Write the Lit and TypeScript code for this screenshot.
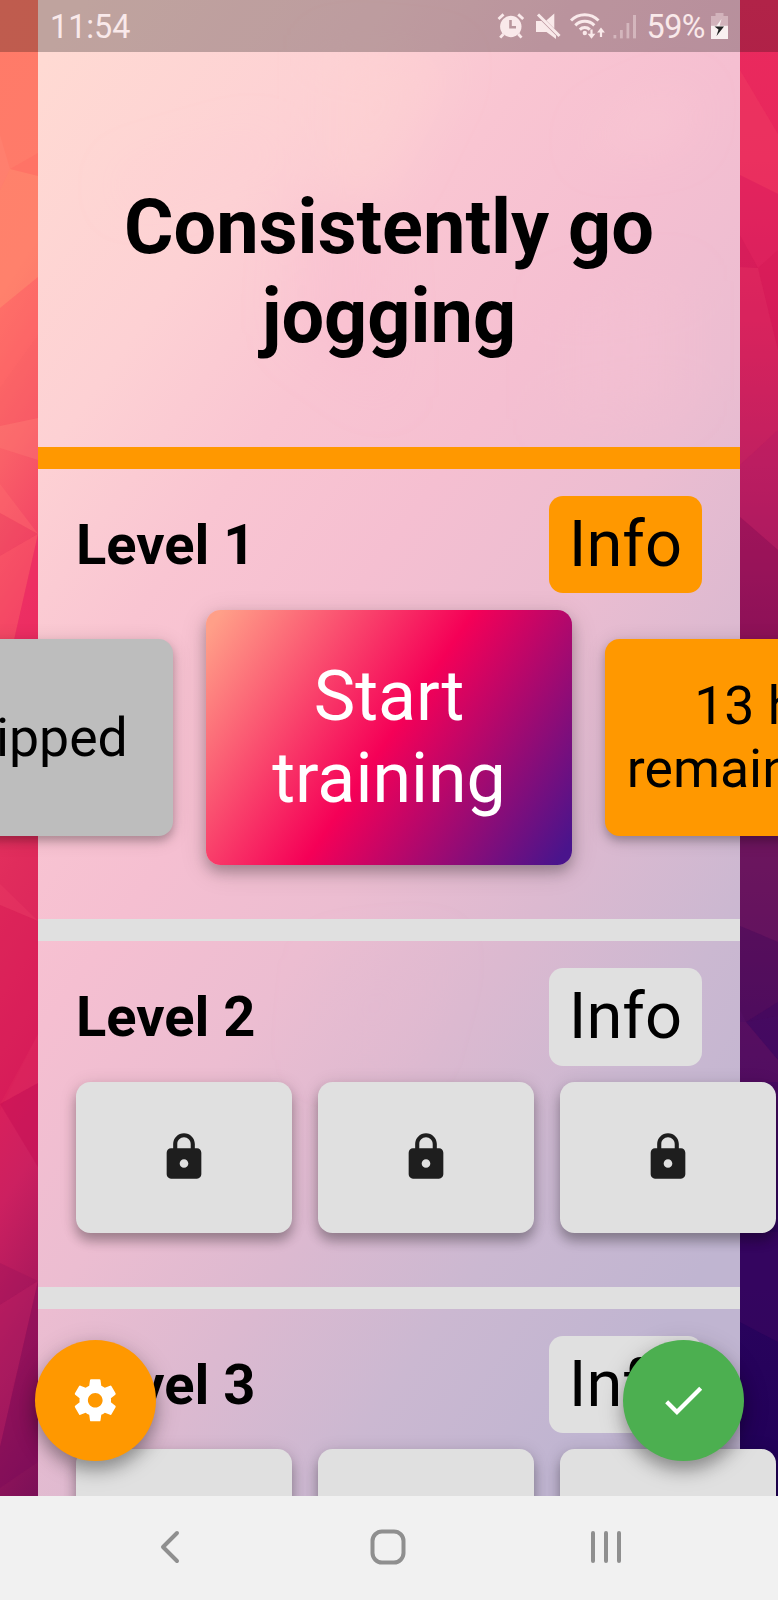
import { LitElement, html, svg, css } from "lit";
import { customElement, property } from "lit/decorators.js";
import { classMap } from "lit/directives/class-map.js";

@customElement("poly-backdrop")
class PolyBackdrop extends LitElement {
  static styles = css`
    :host { display: block; }
    .art { display: block; width: 100%; height: 100%; }
  `;

  // [points, fill, opacity] of the facets seen beside the panel
  private facets: [string, string, number][] = [
    ["0,135 10,169 0,190", "#ffffff", 0.04],
    ["10,169 38,153 38,176", "#ff5a58", 0.2],
    ["10,169 38,176 38,277 0,308 0,190", "#ff9070", 0.35],
    ["0,308 38,277 38,335 0,388", "#ff5a62", 0.3],
    ["0,388 38,335 38,418 0,426", "#f8505f", 0.25],
    ["0,426 38,418 38,460 0,448", "#ff8078", 0.3],
    ["0,484 38,534 0,513", "#ff7070", 0.35],
    ["0,513 38,534 0,556", "#e63c5c", 0.25],
    ["0,556 38,534 14,640 0,640", "#fc5c68", 0.35],
    ["38,534 38,640 14,640", "#e82062", 0.45],
    ["0,884 38,921 0,905", "#f04568", 0.25],
    ["0,905 38,921 38,1034 0,1110", "#d80f52", 0.2],
    ["38,1034 38,1083 0,1104", "#e83060", 0.2],
    ["0,1104 38,1083 38,1167", "#c00850", 0.35],
    ["0,1263 38,1281 0,1305", "#98105a", 0.3],
    ["0,1305 38,1281 0,1447", "#b82064", 0.35],
    ["38,1281 38,1462 0,1488 0,1447", "#780a58", 0.35],
    ["740,70 778,134 778,52 740,52", "#e82058", 0.3],
    ["740,70 778,134 778,194 740,175", "#f03c60", 0.35],
    ["740,175 778,194 778,250 758,268 740,235", "#dc1c5c", 0.3],
    ["740,235 758,268 740,267", "#c80c54", 0.3],
    ["758,268 778,250 778,350", "#d01054", 0.35],
    ["740,267 758,268 778,350 778,430 740,465", "#dc2a60", 0.25],
    ["740,465 778,430 778,550 740,517", "#c42064", 0.35],
    ["740,517 778,550 778,640 740,640", "#8c0c54", 0.35],
    ["740,836 778,836 778,942 740,926", "#70185e", 0.35],
    ["740,926 778,942 778,1002 746,1022 740,1010", "#4c0a58", 0.4],
    ["746,1022 778,1002 778,1016", "#38045a", 0.45],
    ["746,1022 778,1016 778,1060", "#3c0860", 0.55],
    ["740,1022 746,1022 778,1060 778,1082 740,1082", "#5c1060", 0.5],
    ["740,1232 778,1232 778,1342 740,1322", "#3c0860", 0.55],
  ];

  render() {
    return html`<svg class="art" viewBox="0 0 778 1600" preserveAspectRatio="none">
      <defs>
        <linearGradient id="deep" gradientUnits="userSpaceOnUse" x1="0" y1="0" x2="1125" y2="731">
          <stop offset="0" stop-color="#ff7b68"></stop>
          <stop offset=".12" stop-color="#ff7a6a"></stop>
          <stop offset=".19" stop-color="#f95f68"></stop>
          <stop offset=".26" stop-color="#f03c64"></stop>
          <stop offset=".36" stop-color="#e02c5c"></stop>
          <stop offset=".45" stop-color="#d8205c"></stop>
          <stop offset=".49" stop-color="#cc2060"></stop>
          <stop offset=".55" stop-color="#a8185c"></stop>
          <stop offset=".63" stop-color="#7c1058"></stop>
        </linearGradient>
        <linearGradient id="night" x1="0" y1="0" x2="0" y2="1600" gradientUnits="userSpaceOnUse">
          <stop offset="0" stop-color="#ec2f60"></stop>
          <stop offset=".1" stop-color="#e82a5e"></stop>
          <stop offset=".2" stop-color="#d8205c"></stop>
          <stop offset=".29" stop-color="#b81c60"></stop>
          <stop offset=".4" stop-color="#8c145a"></stop>
          <stop offset=".54" stop-color="#68145e"></stop>
          <stop offset=".66" stop-color="#4c0c62"></stop>
          <stop offset=".78" stop-color="#2c045e"></stop>
          <stop offset=".93" stop-color="#200058"></stop>
        </linearGradient>
        <linearGradient id="veil" gradientUnits="userSpaceOnUse" x1="0" y1="0" x2="1120" y2="806">
          <stop offset=".05" stop-color="#ffdad3"></stop>
          <stop offset=".22" stop-color="#fdd1d4"></stop>
          <stop offset=".34" stop-color="#f9c5d2"></stop>
          <stop offset=".46" stop-color="#f5bfd1"></stop>
          <stop offset=".58" stop-color="#ecbdd1"></stop>
          <stop offset=".7" stop-color="#dcb9d0"></stop>
          <stop offset=".82" stop-color="#cbb8d1"></stop>
          <stop offset=".95" stop-color="#c0b5d1"></stop>
        </linearGradient>
        <filter id="soft" x="-30%" y="-30%" width="160%" height="160%">
          <feGaussianBlur stdDeviation="24"></feGaussianBlur>
        </filter>
      </defs>
      <rect width="400" height="1600" fill="url(#deep)"></rect>
      <rect x="400" width="378" height="1600" fill="url(#night)"></rect>
      ${this.facets.map(([p, f, o]) => svg`<polygon points=${p} fill=${f} fill-opacity=${o}></polygon>`)}
      <rect x="38" width="702" height="1496" fill="url(#veil)"></rect>
      <g filter="url(#soft)">
        <polygon points="330,50 450,60 390,180 330,220" fill="#ffd8d2" fill-opacity=".35"></polygon>
        <polygon points="600,130 690,90 680,140 590,150" fill="#fbd0d6" fill-opacity=".35"></polygon>
        <polygon points="120,180 260,140 280,155 130,200" fill="#fbc8d0" fill-opacity=".35"></polygon>
        <polygon points="300,190 380,210 390,400 290,330" fill="#f6b8d0" fill-opacity=".25"></polygon>
        <polygon points="560,300 680,280 680,400 560,420" fill="#f4c0d2" fill-opacity=".4"></polygon>
        <polygon points="330,960 440,950 410,1060 320,1060" fill="#e6bad0" fill-opacity=".3"></polygon>
      </g>
    </svg>`;
  }
}

@customElement("status-bar")
class StatusBar extends LitElement {
  static styles = css`
    :host {
      display: flex; align-items: center; justify-content: space-between;
      box-sizing: border-box; height: 52px; padding: 2px 50px 0 50px;
      background: rgba(0, 0, 0, 0.25); color: #f9e9ea;
      font-size: 32.300px; line-height: 1;
    }
    .tray { display: flex; align-items: center; }
    .icons { display: block; width: 150px; height: 30px; margin-top: -2px; }
    .battery { display: block; width: 17px; height: 30px; margin: -2px 0 0 6px; }
    .pct { letter-spacing: -0.5px; margin-left: 1px; }
  `;
  render() {
    return html`
      <span>11:54</span>
      <div class="tray">
        <svg class="icons" viewBox="496 11 150 30" fill="#f9e9ea" stroke="none">
          <circle cx="510.800" cy="26.500" r="10.700"></circle>
          <path d="M498.500 19l5-4.600M523.200 19l-5-4.600" stroke="#f9e9ea" stroke-width="2.800"></path>
          <path d="M503.500 34l-3.300 3.600M518.200 34l3.300 3.600" stroke="#f9e9ea" stroke-width="2.800"></path>
          <path d="M510.500 20v7.300h5.500" fill="none" stroke="#b9979d" stroke-width="2.600"></path>
          <path d="M536 21h5.500L556 35.500V39l-9.500-7H536zM546.300 20.600l8-7.100v15z"></path>
          <path d="M538 14.500l21.500 21.500" fill="none" stroke="#f9e9ea" stroke-width="3"></path>
          <path d="M571 20.500a19.500 19.500 0 0 1 27.500 0M575.300 25.400a13.200 13.200 0 0 1 19 0M579.800 29.600a7.200 7.200 0 0 1 10 0" fill="none" stroke="#f9e9ea" stroke-width="3"></path>
          <circle cx="584.800" cy="33" r="2.200"></circle>
          <path d="M591.500 29.500v5.500M601 37v-5.500" stroke="#f9e9ea" stroke-width="2.200"></path>
          <path d="M587.600 33.800h7.800l-3.900 5zM597.100 32.400h7.800l-3.900-5z"></path>
          <g fill-opacity=".42">
            <rect x="613.500" y="35" width="2.800" height="3.400"></rect>
            <rect x="620" y="30" width="2.800" height="8.400"></rect>
            <rect x="626.500" y="23" width="2.800" height="15.400"></rect>
            <rect x="633" y="15" width="3" height="23.400"></rect>
          </g>
        </svg>
        <span class="pct">59%</span>
        <svg class="battery" viewBox="711 11 17 30">
          <path d="M715.500 13h8v3h4.500v9h-17v-9h4.500z" fill="#f9e9ea" fill-opacity=".4"></path>
          <rect x="711" y="25.500" width="17" height="13.500" fill="#f9f0f0"></rect>
          <path d="M721.500 19l-6.500 9h4z" fill="#f9f0f0"></path>
          <path d="M714.500 26.500h9.500l-7.500 9.500 2-6.500z" fill="#222"></path>
        </svg>
      </div>
    `;
  }
}

@customElement("session-card")
class SessionCard extends LitElement {
  @property() kind = "locked";
  @property({ attribute: false }) lines: string[] = [];

  static styles = css`
    :host { display: block; flex: none; }
    .card {
      display: flex; flex-direction: column; align-items: center; justify-content: center;
      box-sizing: border-box; width: 281px; height: 196.500px; border-radius: 14.500px;
      font-size: 53.600px; line-height: 62.800px; color: #000; white-space: nowrap;
      box-shadow: 0 5px 9px rgba(0, 0, 0, 0.22), 0 3px 20px rgba(0, 0, 0, 0.14);
    }
    .skipped { background: #bdbdbd; padding-top: 1px; }
    .waiting { background: #ff9800; }
    .active {
      width: 365.300px; height: 255.300px; font-size: 69.900px; line-height: 81.500px; color: #fff;
      background: linear-gradient(124deg, #ff9f88 3%, #f50057 50%, #4a148c 97%);
      box-shadow: 0 7px 13px rgba(0, 0, 0, 0.24), 0 6px 28px rgba(0, 0, 0, 0.14);
    }
    .locked { width: 216px; height: 151.300px; background: #e0e0e0;
      box-shadow: 0 8px 12px rgba(0, 0, 0, 0.28), 0 2px 18px rgba(0, 0, 0, 0.12); }
    .lock { display: block; width: 52px; height: 52px; fill: #1e1e1e; }
  `;

  render() {
    return html`<div class=${classMap({ card: true, [this.kind]: true })}>
      ${this.kind === "locked"
        ? html`<svg class="lock" viewBox="0 0 24 24"><path d="M18 8h-1V6c0-2.760-2.240-5-5-5S7 3.240 7 6v2H6c-1.100 0-2 .9-2 2v10c0 1.100.9 2 2 2h12c1.100 0 2-.9 2-2V10c0-1.100-.9-2-2-2zm-6 9c-1.100 0-2-.9-2-2s.9-2 2-2 2 .9 2 2-.9 2-2 2zm3.100-9H8.900V6c0-1.710 1.390-3.100 3.100-3.100 1.710 0 3.100 1.390 3.100 3.100v2z"></path></svg>`
        : this.lines.map((l) => html`<span>${l}</span>`)}
    </div>`;
  }
}

@customElement("level-section")
class LevelSection extends LitElement {
  @property() name = "";
  @property({ type: Boolean }) current = false;

  static styles = css`
    :host { display: block; }
    .level { border-top: 22px solid #e0e0e0; padding: 27px 38px 0; }
    .level.current { border-color: #ff9800; }
    .head { display: flex; align-items: center; justify-content: space-between; height: 97.300px; }
    .name { font-size: 56px; line-height: 1; font-weight: 700; margin: 0; padding-top: 1px; }
    .info {
      font: inherit; font-size: 65px; line-height: 97px; color: #000; border: 0; padding: 0;
      box-sizing: border-box; width: 153.300px; height: 97.300px; border-radius: 14px; background: #e0e0e0;
    }
    .current .info { background: #ff9800; }
    .row { display: flex; gap: 26px; height: 205.700px; padding-top: 16px; box-sizing: border-box; align-items: flex-start; }
    .current .row { gap: 33.500px; height: 325.500px; margin: 0 -76px; justify-content: center; }
    .current .row { align-items: center; padding: 0 0 37px; }
  `;

  render() {
    return html`<section class=${classMap({ level: true, current: this.current })}>
      <div class="head">
        <h2 class="name">${this.name}</h2>
        <button class="info">Info</button>
      </div>
      <div class="row"><slot></slot></div>
    </section>`;
  }
}

@customElement("app-root")
class AppRoot extends LitElement {
  static styles = css`
    :host {
      display: block; width: 778px; height: 1600px; overflow: hidden; position: relative;
      font-family: Roboto, sans-serif; color: #000;
    }
    .screen { display: grid; grid-template: 1496px 104px / 778px; height: 1600px; }
    .backdrop { grid-area: 1 / 1 / 3 / 2; }
    .content { grid-area: 1 / 1 / 2 / 2; overflow: hidden; z-index: 1; }
    .panel { margin: 0 38px; }
    .title {
      display: flex; align-items: center; justify-content: center; text-align: center;
      box-sizing: border-box; height: 395px; margin: 0; padding: 44px 60px 0;
      font-size: 75.700px; line-height: 88.700px; font-weight: 700;
    }
    .level-1 { height: 472.300px; }
    .level-2 { height: 367.500px; }
    .nav {
      grid-area: 2 / 1 / 3 / 2; z-index: 2; background: #f1f1f1; display: flex;
      align-items: center; justify-content: space-between; padding: 0 153px 2px 151px;
    }
    .key { display: block; width: 38px; height: 38px; fill: none; stroke: #8f8f8f; stroke-width: 4; stroke-linecap: round; stroke-linejoin: round; }
    .fab {
      position: absolute; z-index: 3; top: 1340px; width: 121px; height: 121px; border-radius: 50%;
      display: flex; align-items: center; justify-content: center; border: 0; padding: 0;
      box-shadow: 0 9px 16px rgba(0, 0, 0, 0.28), 0 6px 28px rgba(0, 0, 0, 0.16);
    }
    .settings { left: 34.500px; background: #ff9800; }
    .done { left: 622.500px; background: #4caf50; }
    .glyph { display: block; width: 50.500px; height: 50.500px; fill: #fff; }
  `;

  render() {
    return html`<div class="screen">
      <poly-backdrop class="backdrop"></poly-backdrop>
      <div class="content">
        <status-bar></status-bar>
        <main class="panel">
          <h1 class="title">Consistently go jogging</h1>
          <level-section class="level-1" name="Level 1" current>
            <session-card kind="skipped" .lines=${["Skipped"]}></session-card>
            <session-card kind="active" .lines=${["Start", "training"]}></session-card>
            <session-card kind="waiting" .lines=${["13 h", "remaining"]}></session-card>
          </level-section>
          ${[2, 3].map((n) => html`<level-section class=${"level-" + n} name=${"Level " + n}>
            ${[1, 2, 3].map(() => html`<session-card kind="locked"></session-card>`)}
          </level-section>`)}
        </main>
      </div>
      <button class="fab settings" aria-label="Settings">
        <svg class="glyph" viewBox="0 0 24 24"><path d="M19.430 12.980c.04-.32.07-.64.07-.98s-.03-.66-.07-.98l2.110-1.650c.19-.15.24-.42.12-.64l-2-3.460c-.12-.22-.39-.3-.61-.22l-2.490 1c-.52-.4-1.080-.73-1.690-.98l-.38-2.650C14.460 2.180 14.250 2 14 2h-4c-.25 0-.46.18-.49.42l-.38 2.650c-.61.25-1.170.59-1.690.98l-2.490-1c-.23-.09-.49 0-.61.22l-2 3.460c-.13.22-.07.49.12.64l2.110 1.650c-.04.32-.07.65-.07.98s.03.66.07.98l-2.110 1.650c-.19.15-.24.42-.12.64l2 3.460c.12.22.39.3.61.22l2.490-1c.52.4 1.080.73 1.690.98l.38 2.650c.03.24.24.42.49.42h4c.25 0 .46-.18.49-.42l.38-2.650c.61-.25 1.170-.59 1.690-.98l2.490 1c.23.09.49 0 .61-.22l2-3.460c.12-.22.07-.49-.12-.64l-2.110-1.650zM12 15.500c-1.930 0-3.500-1.570-3.500-3.500s1.570-3.500 3.500-3.500 3.500 1.570 3.500 3.500-1.570 3.500-3.500 3.500z"></path></svg>
      </button>
      <button class="fab done" aria-label="Done">
        <svg class="glyph" viewBox="0 0 24 24"><path d="M9 16.170L4.830 12l-1.420 1.410L9 19 21 7l-1.410-1.410z"></path></svg>
      </button>
      <nav class="nav">
        <svg class="key" viewBox="0 0 38 38"><path d="M26 5L12 19l14 14"></path></svg>
        <svg class="key" viewBox="0 0 38 38"><rect x="3.500" y="3.500" width="31" height="31" rx="9.500"></rect></svg>
        <svg class="key" viewBox="0 0 38 38"><path d="M6 5v28M19 5v28M32 5v28"></path></svg>
      </nav>
    </div>`;
  }
}
